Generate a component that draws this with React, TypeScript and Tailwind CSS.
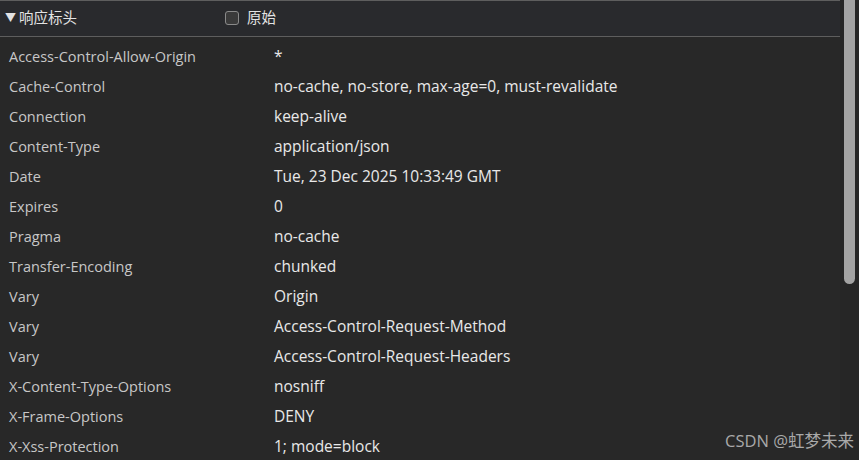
const rows: [string, string][] = [
  ['Access-Control-Allow-Origin', '*'],
  ['Cache-Control', 'no-cache, no-store, max-age=0, must-revalidate'],
  ['Connection', 'keep-alive'],
  ['Content-Type', 'application/json'],
  ['Date', 'Tue, 23 Dec 2025 10:33:49 GMT'],
  ['Expires', '0'],
  ['Pragma', 'no-cache'],
  ['Transfer-Encoding', 'chunked'],
  ['Vary', 'Origin'],
  ['Vary', 'Access-Control-Request-Method'],
  ['Vary', 'Access-Control-Request-Headers'],
  ['X-Content-Type-Options', 'nosniff'],
  ['X-Frame-Options', 'DENY'],
  ['X-Xss-Protection', '1; mode=block'],
];

export default function App() {
  return (
    <div
      className="relative flex h-[460px] w-[859px] overflow-hidden bg-[#282828] text-[14px]"
      style={{ fontFamily: '"Open Sans", "Noto Sans CJK SC", sans-serif' }}
    >
      <div className="flex w-[840px] flex-col">
        <div className="flex h-[37px] shrink-0 items-center border-y border-[#5e5e5e] bg-[#292a2d] pb-[1px] text-[#e3e3e3]">
          <span className="ml-[5px] text-[11px]">▼</span>
          <span className="ml-[3px] text-[14.5px]">响应标头</span>
          <span className="ml-[148px] h-[14px] w-[14px] rounded-[3px] border border-[#8a8a8a] bg-[#3a3a3a]" />
          <span className="ml-[8px] text-[14.5px]">原始</span>
        </div>
        <div className="flex shrink-0 flex-col pt-[5px]">
          {rows.map(([k, v], i) => (
            <div key={i} className="flex h-[30px] shrink-0 items-center">
              <span className="w-[274px] pl-[9px] text-[14.5px] text-[#c7c7c7]">{k}</span>
              <span className="text-[15.5px] text-[#e8e8e8]">{v}</span>
            </div>
          ))}
        </div>
      </div>
      <div className="flex w-[19px] bg-[#262626] pl-[4px]">
        <div className="h-[284px] w-[11px] rounded-b-[6px] bg-[#a3a3a3]" />
      </div>
      <div className="absolute bottom-[6px] right-[5px] text-[16.5px] text-[#a9a9a9]">CSDN @虹梦未来</div>
    </div>
  );
}
